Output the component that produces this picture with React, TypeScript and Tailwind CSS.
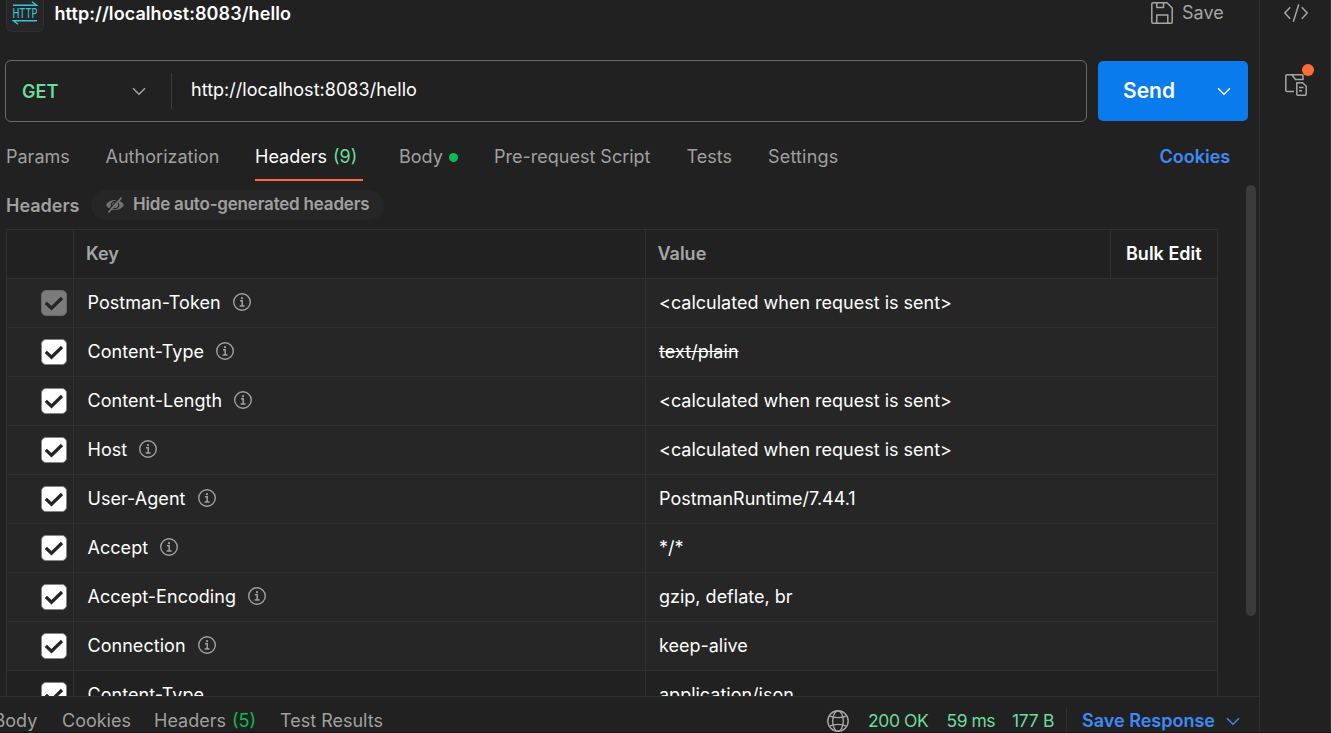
import React from "react";

const CALCULATED = "<calculated when request is sent>";

type HeaderRow = {
  name: string;
  value: string;
  muted?: boolean;
  struck?: boolean;
  custom?: boolean;
};

const rows: HeaderRow[] = [
  { name: "Postman-Token", value: CALCULATED, muted: true },
  { name: "Content-Type", value: "text/plain", struck: true },
  { name: "Content-Length", value: CALCULATED },
  { name: "Host", value: CALCULATED },
  { name: "User-Agent", value: "PostmanRuntime/7.44.1" },
  { name: "Accept", value: "*/*" },
  { name: "Accept-Encoding", value: "gzip, deflate, br" },
  { name: "Connection", value: "keep-alive" },
  { name: "Content-Type", value: "application/json", custom: true },
];

function Chevron({ className }: { className: string }) {
  return (
    <svg className={className} width="14" height="9" viewBox="0 0 14 9" fill="none" stroke="currentColor" strokeWidth="1.5">
      <path d="M1 1.2 7 7.2 13 1.2" />
    </svg>
  );
}

function HttpIcon() {
  return (
    <div className="flex h-8 w-[38px] items-start justify-center rounded-b-md border border-t-0 border-[#303030] bg-[#262626]">
      <svg className="text-[#36c5d8]" width="26" height="26" viewBox="0 0 26 26" fill="none" stroke="currentColor">
        <path d="M1 5.2H24.5L20 1.8M25 20.7H1.5L6 24.2" strokeWidth="1.4" />
        <text x="0.4" y="17.9" textLength="25" lengthAdjust="spacingAndGlyphs" fill="currentColor" stroke="currentColor" strokeWidth="0.2" fontSize="13.4" fontFamily="Inter, sans-serif">HTTP</text>
      </svg>
    </div>
  );
}

function SaveIcon() {
  return (
    <svg width="22" height="22" viewBox="0 0 22 22" fill="none" stroke="currentColor" strokeWidth="1.5" strokeLinejoin="round">
      <path d="M2 .8H16L21.2 6V20Q21.2 21.2 20 21.2H2Q.8 21.2.8 20V2Q.8.8 2 .8ZM5.8.8V5.5H12.5V.8M5.8 21V13H16.8V21" />
    </svg>
  );
}

function CodeIcon() {
  return (
    <svg width="24" height="18" viewBox="0 0 24 18" fill="none" stroke="currentColor" strokeWidth="1.5">
      <path d="M6.2 3.2.8 9l5.4 5.8M17.8 3.2 23.2 9l-5.4 5.8M14.8.2 9.3 17.8" />
    </svg>
  );
}

function RelatedIcon() {
  return (
    <svg width="22" height="22" viewBox="0 0 22 22" fill="none" stroke="currentColor" strokeWidth="1.5" strokeLinejoin="round">
      <path d="M9 17.5H2Q.8 17.5.8 16.2V2Q.8.8 2 .8H17Q18 .8 18 2V5.5H10.5L6.8.8M11.8 8.8H17.6L21.2 12.2V20.2Q21.2 21.2 20.2 21.2H12.8Q11.8 21.2 11.8 20.2ZM14 13.5H18.5M14 16.8H17" />
    </svg>
  );
}

function HiddenEyeIcon() {
  return (
    <svg width="18" height="16" viewBox="0 0 18 16" fill="none">
      <path d="M0 8C3.5 1.2 14.500 1.2 18 8C14.500 14.800 3.500 14.800 0 8Z" fill="currentColor" />
      <circle cx="9" cy="8" r="3.700" stroke="#262626" strokeWidth="1.300" />
      <path d="M14.300-.2 1.100 14.600" stroke="#262626" strokeWidth="1.400" />
      <path d="M15.500.6 2.500 15.400" stroke="currentColor" strokeWidth="1.700" />
    </svg>
  );
}

function InfoIcon() {
  return (
    <svg className="ml-3 text-[#a0a0a0]" width="18" height="18" viewBox="0 0 18 18" fill="none" stroke="currentColor">
      <circle cx="9" cy="9" r="8.3" strokeWidth="1.4" />
      <path d="M7 7.8H9.2V12.8M6.6 13H11.6" strokeWidth="1.5" />
      <circle cx="9" cy="5.2" r="1.1" fill="currentColor" stroke="none" />
    </svg>
  );
}

function GlobeIcon() {
  return (
    <svg className="text-[#a6a6a6]" width="22" height="22" viewBox="0 0 22 22" fill="none" stroke="currentColor" strokeWidth="1.4">
      <circle cx="11" cy="11" r="10.2" />
      <ellipse cx="11" cy="11" rx="5.3" ry="10.2" />
      <path d="M2.500 5.800C5 7 8 7.600 11 7.600s6-.6 8.500-1.800M2.500 16.200C5 15 8 14.400 11 14.400s6 .6 8.500 1.800" />
    </svg>
  );
}

function Checkbox({ muted }: { muted?: boolean }) {
  return (
    <span className={muted ? "flex size-[26px] items-center justify-center rounded-[5px] border border-[#696969] bg-[#7b7b7b]" : "flex size-[26px] items-center justify-center rounded-[5px] border border-[#858585] bg-white"}>
      <svg width="20" height="16" viewBox="0 0 20 16" fill="none" stroke="#242424" strokeWidth="3.2">
        <path d="M1.8 7.8 7.5 13.2 18 3" />
      </svg>
    </span>
  );
}

function RequestTitle() {
  return (
    <div className="flex h-[60px] items-start pl-1.5">
      <HttpIcon />
      <span className="ml-[10.5px] w-[1096px] pt-px text-lg leading-[25px] font-semibold tracking-[0.08px] text-white">http://localhost:8083/hello</span>
      <div className="flex shrink-0 pt-0.5 text-[#a6a6a6]">
        <SaveIcon />
        <span className="ml-[9.5px] text-[18px] leading-[22px]">Save</span>
      </div>
    </div>
  );
}

function UrlBar() {
  return (
    <div className="flex h-[62px] items-center pl-[5px]">
      <div className="flex h-[62px] w-[1082px] items-center rounded-md border border-[#6b6b6b]">
        <div className="flex h-9 w-[166px] items-center border-r border-[#3d3d3d] pl-4 font-semibold text-[#6bdd9a]">
          <span className="w-[110px] pt-px">GET</span>
          <Chevron className="text-[#a6a6a6]" />
        </div>
        <span className="-mt-[3px] pl-[19px] tracking-[0.03px] text-white">http://localhost:8083/hello</span>
      </div>
      <div className="ml-[11px] flex h-[60px] w-[150px] items-center rounded-[5px] bg-[#097bed] pl-[25px] text-white">
        <span className="w-[94px] text-[21px] font-semibold">Send</span>
        <Chevron className="text-white" />
      </div>
    </div>
  );
}

function RequestTabs() {
  return (
    <div className="flex h-[59px] items-start pt-[11px] pl-1.5 leading-[48px] whitespace-nowrap text-[#a0a0a0]">
      <span className="w-[99.5px]">Params</span>
      <span className="w-[149.5px] tracking-[0.03px]">Authorization</span>
      <div className="mr-9 h-12 w-[108px] border-b-2 border-[#ff6c37] text-white">
        Headers <span className="ml-px text-[#6bdd9a]">(9)</span>
      </div>
      <span className="flex w-[95px] items-center gap-1.5">
        Body <i className="mt-px size-[9px] rounded-full bg-[#0cbb52]" />
      </span>
      <span className="w-[192.5px]">Pre-request Script</span>
      <span className="w-[81.5px]">Tests</span>
      <span className="w-[391.5px] tracking-[0.18px]">Settings</span>
      <span className="font-semibold text-[#3d8bf8]">Cookies</span>
    </div>
  );
}

function HeadersTable() {
  return (
    <div className="ml-1.5 w-[1212px] border-x border-[#303030]">
      <div className="flex h-[50px] border-y border-[#303030] font-semibold text-[#a6a6a6]">
        <div className="w-[67px] border-r border-[#303030]" />
        <div className="flex w-[572px] items-center border-r border-[#303030] pb-0.5 pl-3">Key</div>
        <div className="flex w-[465px] items-center border-r border-[#303030] pb-0.5 pl-[11.5px]">Value</div>
        <div className="flex flex-1 items-center pb-0.5 pl-[15px] text-white">Bulk Edit</div>
      </div>
      {rows.map((row, index) => (
        <div key={index} className={row.custom ? "flex h-[49px] border-b border-[#303030] bg-[#212121] text-white" : "flex h-[49px] border-b border-[#303030] bg-[#262626] text-white"}>
          <div className="flex w-[67px] items-center border-r border-[#303030] pl-[34px]">
            <Checkbox muted={row.muted} />
          </div>
          <div className="flex w-[572px] items-center border-r border-[#303030] pb-0.5 pl-[13.5px] tracking-[0.04px]">
            {row.name}
            {!row.custom && <InfoIcon />}
          </div>
          <div className="flex items-center pb-0.5 pl-[13px]">
            <span className={row.struck ? "tracking-[0.08px] line-through" : ""}>{row.value}</span>
          </div>
        </div>
      ))}
    </div>
  );
}

function ResponseBar() {
  return (
    <div className="flex h-9 shrink-0 items-start overflow-hidden border-t border-[#303030] leading-[48px] whitespace-nowrap text-[#a0a0a0]">
      <span className="-ml-[6.5px] w-[68.5px]">Body</span>
      <span className="w-[92px]">Cookies</span>
      <span className="w-[126px]">
        Headers <span className="ml-px text-[#0cbb52]">(5)</span>
      </span>
      <span className="w-[547px]">Test Results</span>
      <span className="flex h-12 w-[41px] items-center">
        <GlobeIcon />
      </span>
      <span className="w-[78.5px] text-[17.5px] tracking-[-0.4px] text-[#6bdd9a]">200 OK</span>
      <span className="w-[65.5px] text-[17.5px] tracking-[-0.5px] text-[#6bdd9a]">59 ms</span>
      <span className="w-[54px] text-[17.5px] tracking-[-0.3px] text-[#6bdd9a]">177 B</span>
      <span className="mt-2.5 h-7 w-px bg-[#303030]" />
      <span className="ml-[15px] flex h-12 w-36 items-center font-semibold text-[#3d8bf8]">Save Response</span>
      <Chevron className="mt-5 text-[#3d8bf8]" />
    </div>
  );
}

export default function App() {
  return (
    <div className="flex h-[733px] w-[1331px] overflow-hidden border-b border-[#151515] bg-[#212121] font-[Inter,sans-serif] text-[18px]">
      <main className="flex w-[1260px] shrink-0 flex-col border-r border-[#303030]">
        <RequestTitle />
        <UrlBar />
        <RequestTabs />
        <section className="flex h-[515px] overflow-hidden">
          <div className="w-[1246px] shrink-0">
            <div className="flex h-12 items-center pl-1.5 font-semibold text-[#a0a0a0]">
              <span className="w-[85px]">Headers</span>
              <div className="flex h-[30px] w-[293px] items-center rounded-full bg-[#262626] pl-[15px]">
                <span className="w-[27px] shrink-0 text-[#727272]">
                  <HiddenEyeIcon />
                </span>
                <span className="text-[17px] tracking-[-0.2px] whitespace-nowrap">Hide auto-generated headers</span>
              </div>
            </div>
            <HeadersTable />
          </div>
          <div className="mt-1 h-[431px] w-[10px] rounded-full bg-[#3b3b3b]" />
        </section>
        <ResponseBar />
      </main>
      <aside className="flex flex-1 flex-col border-r border-[#303030] pt-1 pl-6 text-[#a6a6a6]">
        <CodeIcon />
        <div className="relative mt-[52px] ml-px w-[22px]">
          <RelatedIcon />
          <span className="absolute -top-[10px] left-[17px] size-3 rounded-full bg-[#ff6c37]" />
        </div>
      </aside>
    </div>
  );
}
